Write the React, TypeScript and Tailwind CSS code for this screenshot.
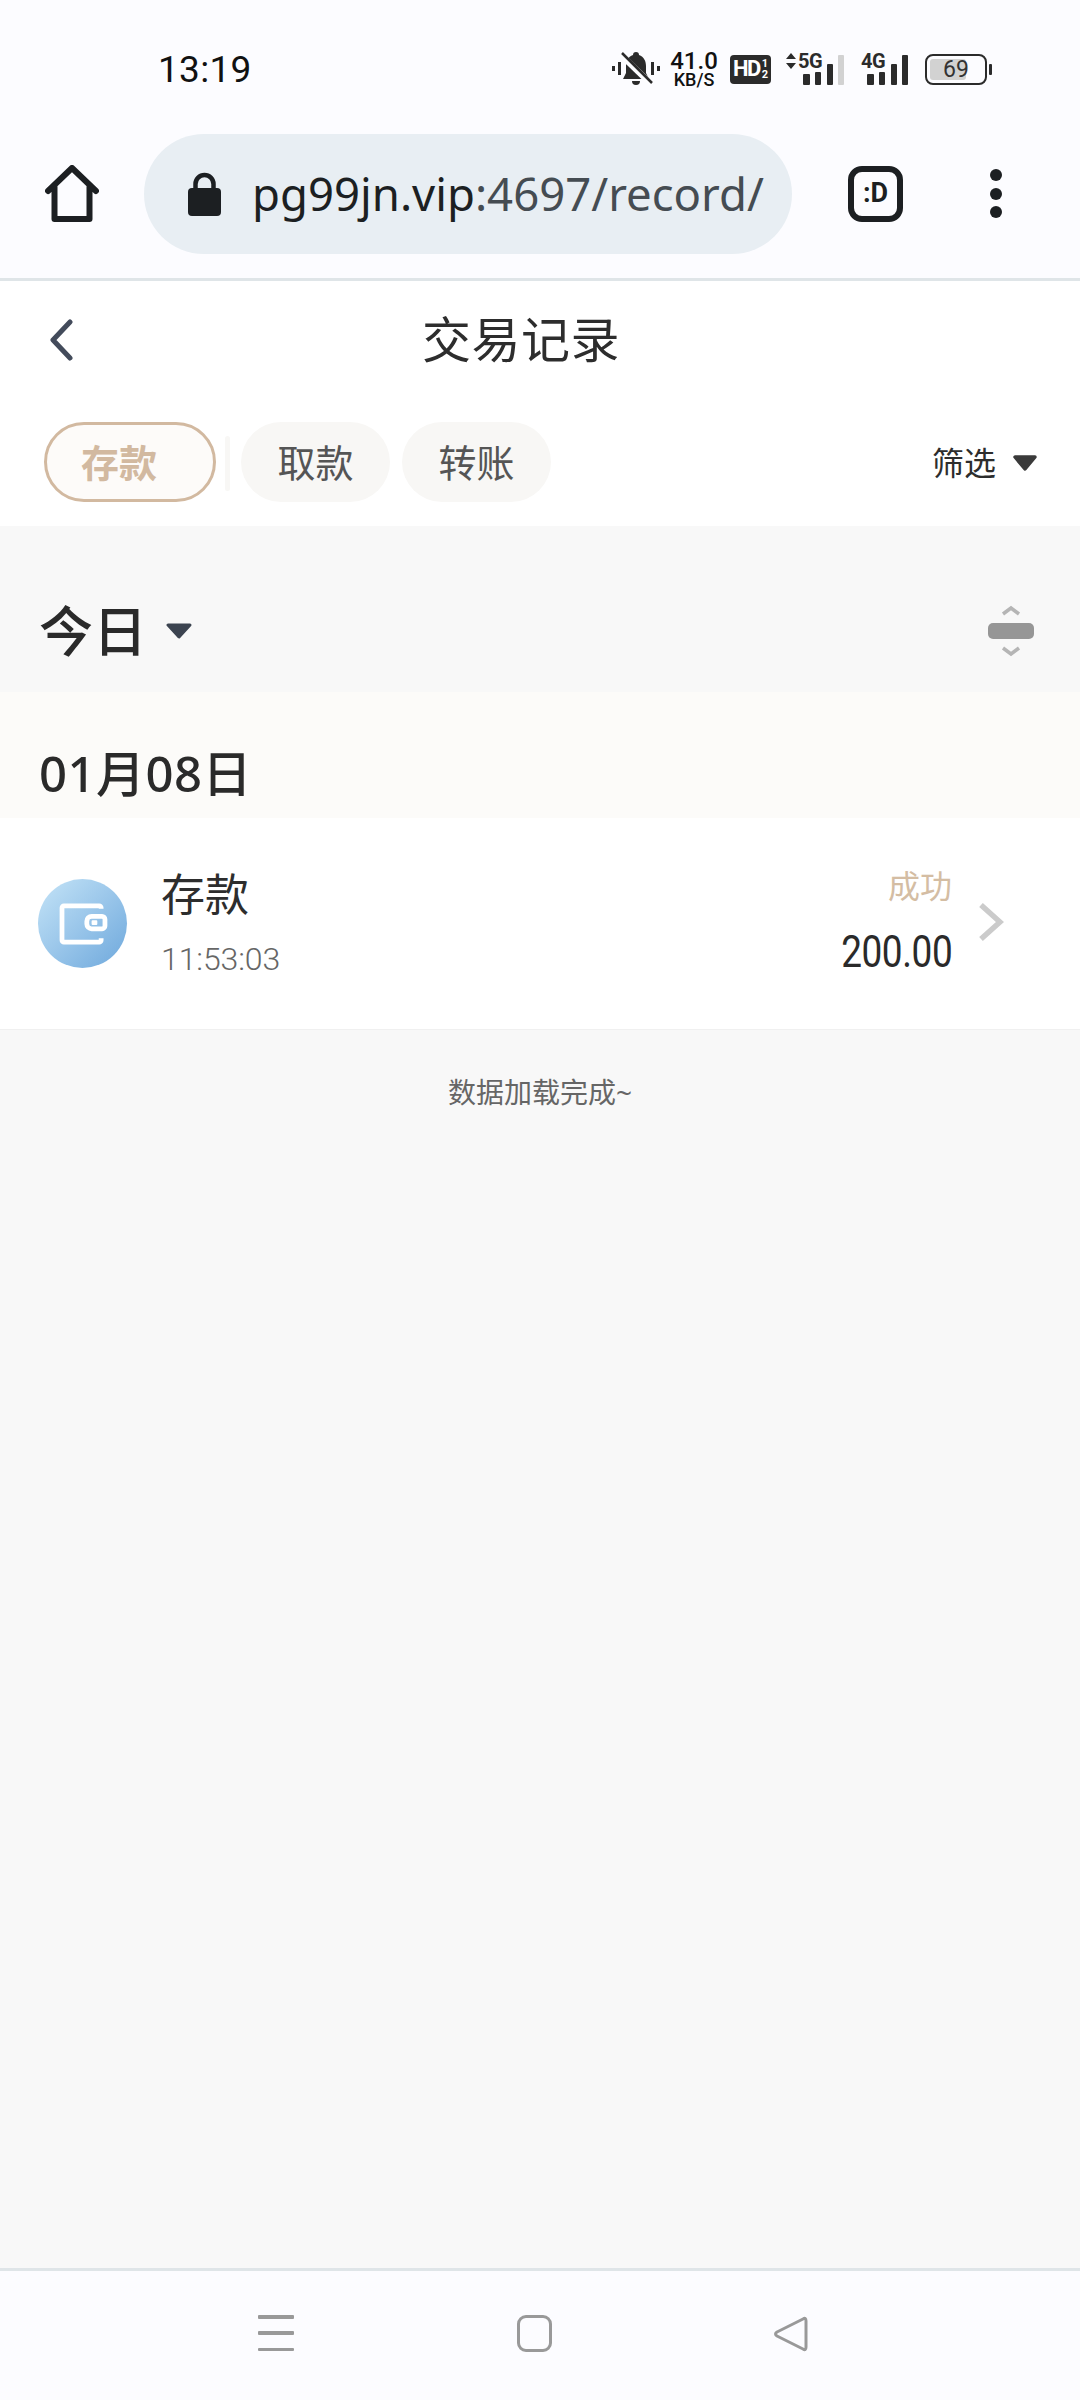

import React from "react";

const cjk = "font-['Noto_Sans','Noto_Sans_CJK_SC',sans-serif]";

function Bars({ last }: { last: boolean }) {
  return (
    <svg width="42" height="32" viewBox="0 0 42 32" className="block">
      <rect x="0" y="21" width="7" height="11" rx="1" fill="#2b2b2b" />
      <rect x="12" y="19" width="6" height="13" rx="1" fill="#2b2b2b" />
      <rect x="24" y="11" width="6" height="21" rx="1" fill="#2b2b2b" />
      <rect x="35" y="2" width="6" height="30" rx="1" fill={last ? "#2b2b2b" : "#d2d2d2"} />
    </svg>
  );
}

function StatusBar() {
  return (
    <div className="flex h-[118px] shrink-0 items-center pt-[20px] pl-[158px] pr-[88px]">
      <span className="font-['Roboto',sans-serif] text-[37px] leading-none tracking-[0.3px] text-[#111]">13:19</span>
      <div className="ml-auto flex items-center">
        <svg width="48" height="36" viewBox="0 0 48 36" className="block">
          <rect x="0" y="15" width="3" height="5" fill="#2b2b2b" />
          <rect x="6" y="11" width="3" height="13" fill="#2b2b2b" />
          <rect x="45" y="15" width="3" height="5" fill="#2b2b2b" />
          <rect x="39" y="11" width="3" height="13" fill="#2b2b2b" />
          <path d="M24 1c-2 0-3 1-3 3-5 2-7 6-7 11v7l-3 6h26l-3-6v-7c0-5-2-9-7-11 0-2-1-3-3-3z" fill="#2b2b2b" />
          <path d="M20 30h8a4 4 0 0 1-8 0z" fill="#2b2b2b" />
          <path d="M8 3l31 30" stroke="#fdfdff" strokeWidth="6" />
          <path d="M10 2l30 30" stroke="#2b2b2b" strokeWidth="2.5" />
        </svg>
        <div className="ml-[11px] flex w-[46px] flex-col items-center font-['Roboto',sans-serif] leading-none text-[#111]">
          <span className="text-[24px] font-medium leading-[20px]">41.0</span>
          <span className="mt-[1px] text-[18px] font-medium leading-[15px]">KB/S</span>
        </div>
        <div className="ml-[13px] flex h-[29px] w-[41px] items-center justify-center rounded-[4px] bg-[#2b2b2b] font-['Roboto',sans-serif] text-[22px] font-bold leading-none text-white">
          <span className="tracking-[-1.5px]">HD</span>
          <span className="ml-[2px] flex flex-col text-[11px] leading-[11px]"><span>1</span><span>2</span></span>
        </div>
        <div className="relative ml-[14px] h-[32px] w-[60px]">
          <svg width="12" height="16" viewBox="0 0 12 16" className="absolute left-0 top-0">
            <path d="M6 0l5 6H1zM6 16l5-6H1z" fill="#2b2b2b" />
          </svg>
          <span className="absolute left-[13px] top-[-2px] font-['Roboto',sans-serif] text-[20px] font-bold leading-none tracking-[-0.5px] text-[#2b2b2b]">5G</span>
          <div className="absolute bottom-0 right-0"><Bars last={false} /></div>
        </div>
        <div className="relative ml-[16px] h-[32px] w-[48px]">
          <span className="absolute left-0 top-[-2px] font-['Roboto',sans-serif] text-[20px] font-bold leading-none tracking-[-0.5px] text-[#2b2b2b]">4G</span>
          <div className="absolute bottom-0 right-0"><Bars last={true} /></div>
        </div>
        <div className="relative ml-[16px] flex h-[31px] w-[62px] items-center justify-center overflow-hidden rounded-[8px] border-[2px] border-[#2b2b2b]">
          <div className="absolute inset-y-[3px] left-[3px] w-[36px] rounded-[3px] bg-[#d2d2d2]" />
          <span className="relative font-['Roboto',sans-serif] text-[23px] leading-none text-[#333]">69</span>
        </div>
        <div className="ml-[2px] h-[11px] w-[3px] rounded-[1px] bg-[#2b2b2b]" />
      </div>
    </div>
  );
}

function Toolbar() {
  return (
    <div className="flex h-[160px] shrink-0 items-center pb-[9px] pl-[45px]">
      <svg width="54" height="58" viewBox="0 0 54 58" className="block shrink-0" fill="none" stroke="#1c1f22" strokeWidth="6" strokeLinejoin="round" strokeLinecap="round">
        <path d="M3 26L27 3l24 23M9.500 22v32h35V22" />
      </svg>
      <div className={`ml-[45px] flex h-[120px] w-[648px] shrink-0 items-center rounded-full bg-[#e8eef3] pl-[43px] ${cjk}`}>
        <svg width="35" height="44" viewBox="0 0 35 44" className="block shrink-0">
          <path d="M8.500 18v-6a9 9 0 0 1 18 0v6" fill="none" stroke="#1c1f22" strokeWidth="4.500" />
          <rect x="1" y="16" width="33" height="28" rx="4" fill="#1c1f22" />
        </svg>
        <span className="ml-[30px] whitespace-nowrap text-[45.500px] leading-none text-[#1c1f22]">
          pg99jn.vip<span className="text-[#454c52]">:4697/record/</span>
        </span>
      </div>
      <div className="ml-[56px] flex h-[56px] w-[55px] shrink-0 items-center justify-center rounded-[14px] border-[6px] border-[#1c1f22] font-['Roboto',sans-serif] text-[27px] font-bold leading-none text-[#1c1f22]">
        :D
      </div>
      <div className="ml-[87px] flex shrink-0 flex-col gap-[6.500px]">
        <div className="h-[12px] w-[12px] rounded-full bg-[#1c1f22]" />
        <div className="h-[12px] w-[12px] rounded-full bg-[#1c1f22]" />
        <div className="h-[12px] w-[12px] rounded-full bg-[#1c1f22]" />
      </div>
    </div>
  );
}

function Header() {
  return (
    <div className="relative flex h-[118px] shrink-0 items-center justify-center pr-[38px]">
      <svg width="24" height="42" viewBox="0 0 24 42" className="absolute left-[49px] top-[38px]" fill="none" stroke="#434b5b" strokeWidth="5" strokeLinecap="round" strokeLinejoin="round">
        <path d="M21 3L4 21l17 18" />
      </svg>
      <span className="mt-[-1px] text-[49px] leading-none tracking-[0.5px] text-[#2d2d2d]">交易记录</span>
    </div>
  );
}

function Tabs() {
  return (
    <div className="flex h-[127px] shrink-0 items-start pl-[44px] pr-[42px] pt-[23px]">
      <div className="flex h-[80px] w-[172px] items-center rounded-full border-[3px] border-[#d2b9a0] bg-[#fdfbf9] pl-[34px] text-[38px] font-bold leading-none text-[#d2b9a0]">
        存款
      </div>
      <div className="ml-[9px] mt-[14px] h-[55px] w-[5px] rounded-full bg-[#f8f7f5]" />
      <div className="ml-[11px] flex h-[80px] w-[149px] items-center justify-center rounded-full bg-[#f8f7f5] text-[38px] leading-none text-[#555]">
        取款
      </div>
      <div className="ml-[12px] flex h-[80px] w-[149px] items-center justify-center rounded-full bg-[#f8f7f5] text-[38px] leading-none text-[#555]">
        转账
      </div>
      <div className="ml-auto flex h-[80px] items-center pt-[2px]">
        <span className="text-[32px] leading-none text-[#2d2d2d]">筛选</span>
        <svg width="26" height="17" viewBox="0 0 26 17" className="ml-[16px] block">
          <path d="M3 2h20L13 14z" fill="#3a3a3a" stroke="#3a3a3a" strokeWidth="3.500" strokeLinejoin="round" />
        </svg>
      </div>
    </div>
  );
}

function FilterRow() {
  return (
    <div className="flex h-[166px] shrink-0 items-center pl-[39px] pr-[46px] pt-[43px]">
      <span className="text-[54px] font-medium leading-none text-[#2a2a2a]">今日</span>
      <svg width="28" height="16" viewBox="0 0 28 16" className="ml-[18px] block">
        <path d="M3 2h22L14 14z" fill="#3c4450" stroke="#3c4450" strokeWidth="3" strokeLinejoin="round" />
      </svg>
      <svg width="46" height="52" viewBox="0 0 46 52" className="ml-auto block">
        <path d="M15 9l8-6 8 6" fill="none" stroke="#b5b5b5" strokeWidth="3.500" />
        <rect x="0" y="18" width="46" height="16" rx="5" fill="#969696" />
        <path d="M15 43l8 6 8-6" fill="none" stroke="#b5b5b5" strokeWidth="3.500" />
      </svg>
    </div>
  );
}

function DateRow() {
  return (
    <div className="flex h-[126px] shrink-0 items-center bg-[#fcfbf9] pl-[39px] pt-[36px]">
      <span className="whitespace-nowrap text-[49px] font-medium leading-none tracking-[0.5px] text-[#2a2a2a]">01月08日</span>
    </div>
  );
}

function Record() {
  return (
    <div className="flex h-[212px] shrink-0 items-center border-b-[1px] border-[#f0f0f0] bg-white pl-[38px] pr-[76px]">
      <div className="flex h-[89px] w-[89px] shrink-0 items-center justify-center rounded-full bg-gradient-to-br from-[#c5e4f7] to-[#6ea8dc]">
        <svg width="50" height="42" viewBox="0 0 50 44" fill="none" stroke="#fff" strokeWidth="5" strokeLinejoin="round">
          <path d="M44 6V5a2 2 0 0 0-2-2H5a2 2 0 0 0-2 2v34a2 2 0 0 0 2 2h37a2 2 0 0 0 2-2v-2" />
          <path d="M45 14H34a5 5 0 0 0-5 5v3a5 5 0 0 0 5 5h11a3 3 0 0 0 3-3v-7a3 3 0 0 0-3-3z" />
          <rect x="35" y="19" width="4" height="3" fill="#fff" strokeWidth="2" />
        </svg>
      </div>
      <div className="ml-[34px] flex flex-col">
        <span className="text-[44px] leading-none text-[#2d2d2d]">存款</span>
        <span className="mt-[27px] font-['Roboto',sans-serif] text-[32px] font-light leading-none tracking-[-0.1px] text-[#666]">11:53:03</span>
      </div>
      <div className="ml-auto mt-[-4px] flex flex-col items-end">
        <span className="text-[32px] leading-none text-[#d4bda3]">成功</span>
        <span className="mt-[28px] origin-right scale-x-[0.84] font-['Roboto',sans-serif] text-[44px] font-normal leading-none tracking-[-0.5px] text-[#2a2a2a]">200.00</span>
      </div>
      <svg width="26" height="40" viewBox="0 0 26 40" className="ml-[26px] mt-[-3px] block shrink-0" fill="none" stroke="#cbcbcb" strokeWidth="5.500">
        <path d="M3 3l19 17L3 37" />
      </svg>
    </div>
  );
}

function NavBar() {
  return (
    <div className="flex h-[132px] shrink-0 items-start border-t-[3px] border-[#dfe5e8] bg-[#fcfcff] pt-[44px] pl-[258px]">
      <div className="flex h-[36px] w-[36px] flex-col justify-between">
        <div className="h-[3.500px] rounded-[1px] bg-[#999]" />
        <div className="h-[3.500px] rounded-[1px] bg-[#999]" />
        <div className="h-[3.500px] rounded-[1px] bg-[#999]" />
      </div>
      <div className="ml-[223px] h-[37px] w-[35px] rounded-[9px] border-[3px] border-[#999]" />
      <svg width="36" height="36" viewBox="0 0 36 36" className="ml-[221px] mt-[1px] block" fill="none" stroke="#999" strokeWidth="3" strokeLinejoin="round" strokeLinecap="round">
        <path d="M30 3Q33 1 33 5V31Q33 35 30 33L4 20Q1 18 4 16Z" />
      </svg>
    </div>
  );
}

export default function App() {
  return (
    <div className={`flex h-[2400px] w-[1080px] flex-col overflow-hidden bg-[#f8f8f8] ${cjk}`}>
      <div className="h-[281px] shrink-0 border-b-[3px] border-[#dfe5e8] bg-[#fcfcff]">
        <StatusBar />
        <Toolbar />
      </div>
      <div className="shrink-0 bg-white">
        <Header />
        <Tabs />
      </div>
      <FilterRow />
      <DateRow />
      <Record />
      <div className="flex-1 pt-[44px] text-center text-[28px] leading-[36px] text-[#666]">数据加载完成~</div>
      <NavBar />
    </div>
  );
}
